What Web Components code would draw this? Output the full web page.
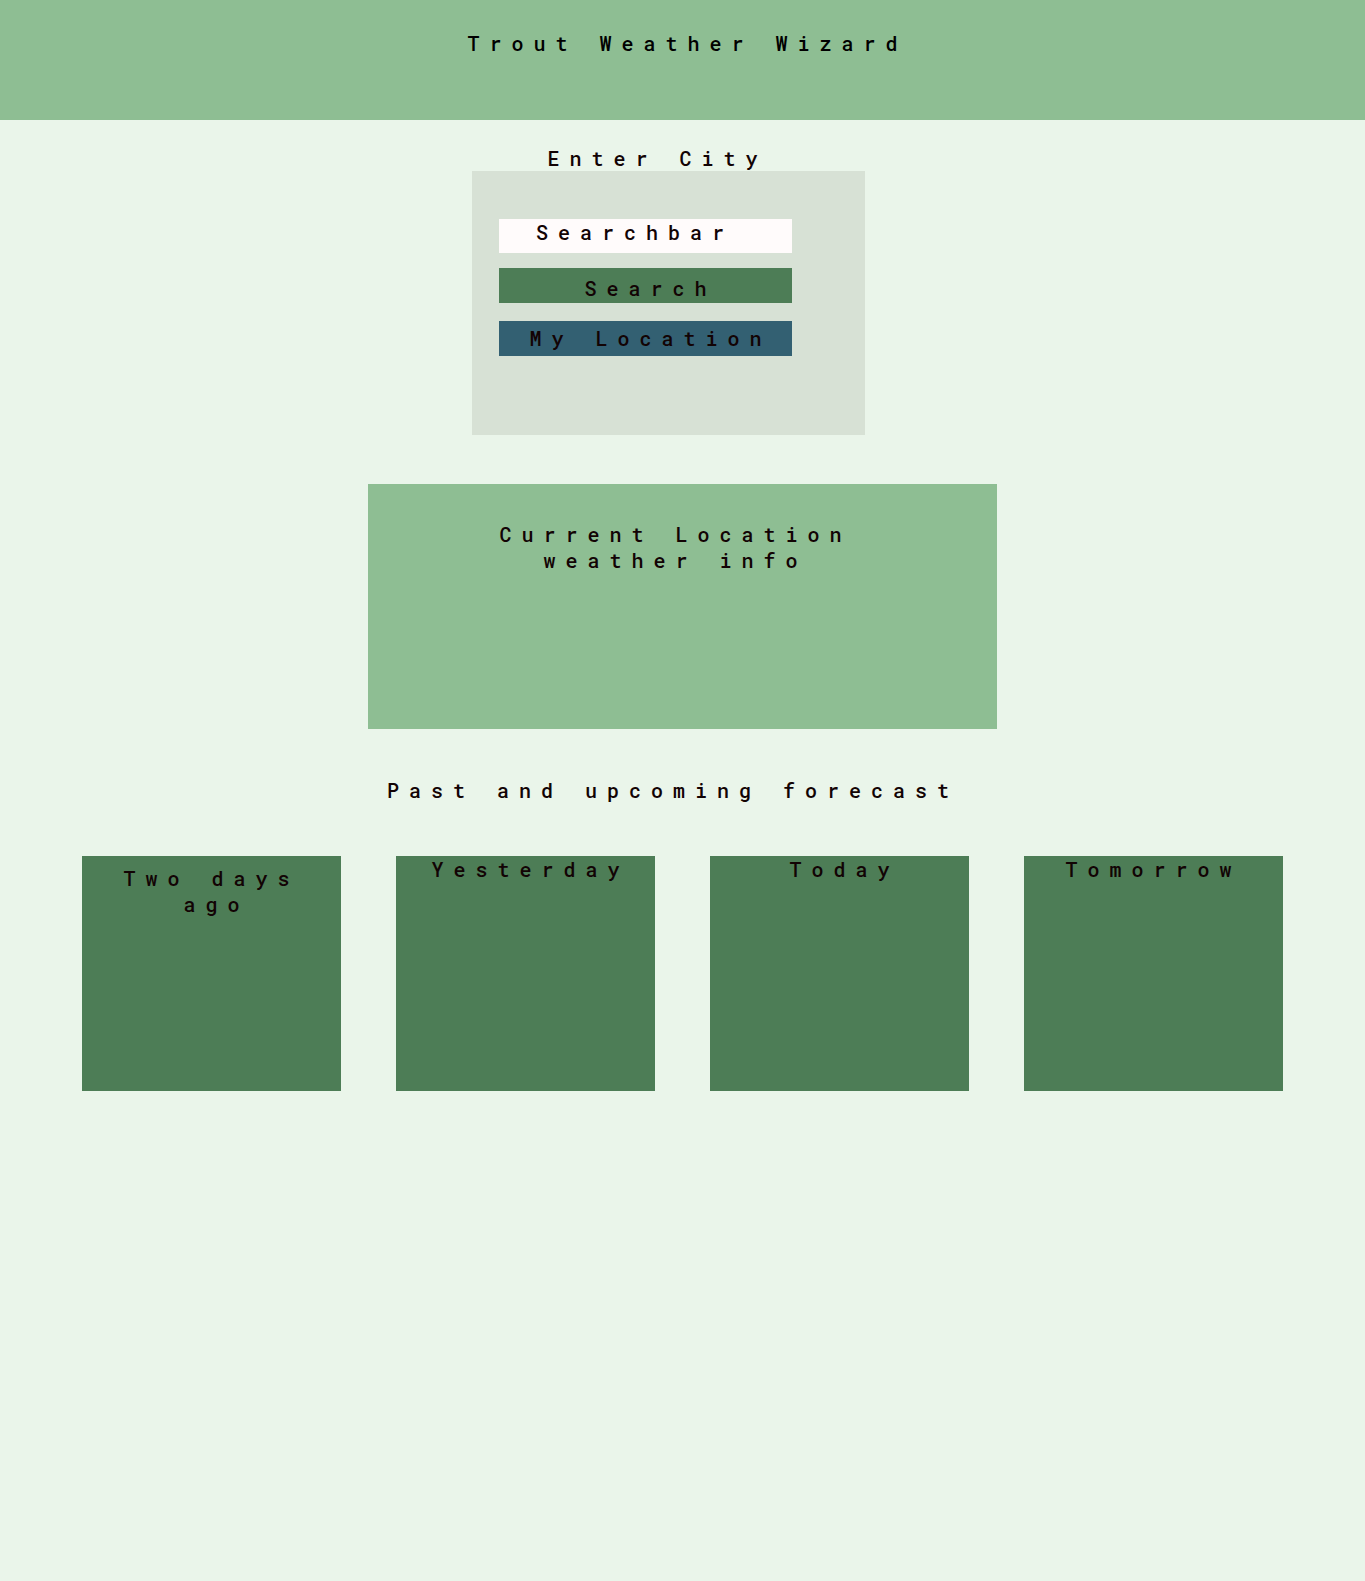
<!DOCTYPE html>
<html lang="en">
<head>
<meta charset="utf-8">
<meta name="viewport" content="width=device-width, initial-scale=1">
<title>Trout Weather Wizard</title>
<style>
  :root {
    --page: #eaf5ea;
    --sage: #8ebe93;
    --moss: #4d7d56;
    --lake: #336072;
    --mist: #d7e1d5;
    --paper: #fffbfb;
    --ink: #120304;
  }
  body {
    margin: 0;
    min-height: 100vh;
    background: var(--page);
    color: var(--ink);
    font: 500 20px/26px "Roboto Mono", "DejaVu Sans Mono", "Liberation Mono", monospace;
    letter-spacing: 10px;
  }
</style>
</head>
<body>
<weather-app></weather-app>
<script>
  class BaseElement extends HTMLElement {
    constructor() {
      super();
      this.attachShadow({ mode: "open" }).innerHTML =
        `<style>
          *, :host { box-sizing: border-box; }
          h1, h2, h3, p { margin: 0; font: inherit; text-align: center; }
          ${this.constructor.css}
        </style>${this.constructor.html}`;
    }
  }

  customElements.define("app-header", class extends BaseElement {
    static css = `
      :host { display: block; background: var(--sage); color: #000; padding: 30px 0 64px 10px; }`;
    static html = `<header><h1><slot></slot></h1></header>`;
  });

  customElements.define("city-search", class extends BaseElement {
    static css = `
      :host { display: block; width: 100%; max-width: 393px; }
      label { display: block; text-align: center; padding-right: 22px; }
      .panel { background: var(--mist); padding: 48px 73px 79px 27px; display: flex; flex-direction: column; }
      input, button {
        display: block; width: 100%; min-width: 0; margin: 0; border: 0; border-radius: 0;
        font: inherit; letter-spacing: inherit; color: inherit;
      }
      input { height: 34px; padding: 0 0 8px 37px; background: var(--paper); }
      input::placeholder { color: var(--ink); opacity: 1; }
      button { height: 35px; text-align: center; cursor: pointer; white-space: nowrap; }
      .search { margin-top: 15px; padding: 7px 0 2px 10px; background: var(--moss); }
      .locate { margin-top: 18px; padding: 4px 0 5px 10px; background: var(--lake); }`;
    static html = `
      <form onsubmit="return false">
        <label for="city">Enter City</label>
        <div class="panel">
          <input id="city" type="text" placeholder="Searchbar">
          <button class="search" type="submit">Search</button>
          <button class="locate" type="button">My Location</button>
        </div>
      </form>`;
  });

  customElements.define("current-weather", class extends BaseElement {
    static css = `
      :host { display: block; width: 100%; max-width: 629px; min-height: 245px; background: var(--sage); padding: 37px 134px 38px 120px; }`;
    static html = `<h2><slot></slot></h2>`;
  });

  customElements.define("day-card", class extends BaseElement {
    static css = `
      :host { display: block; min-height: 235px; background: var(--moss); padding: 0 0 0 10px; }
      :host([lead]) { padding: 9px 24px 0 34px; }
      :host([hang]) { text-indent: -10px; }`;
    static html = `<h3><slot></slot></h3>`;
  });

  customElements.define("forecast-section", class extends BaseElement {
    static css = `
      :host { display: block; width: 100%; }
      h2 { padding-right: 19px; margin-bottom: 53px; }
      .days { display: grid; grid-template-columns: repeat(4, minmax(0, 1fr)); gap: 55px; padding: 0 82px; }
      @media (max-width: 1200px) { .days { grid-template-columns: repeat(auto-fit, minmax(250px, 1fr)); } }`;
    static html = `
      <section>
        <h2><slot name="title"></slot></h2>
        <div class="days"><slot></slot></div>
      </section>`;
  });

  customElements.define("weather-app", class extends BaseElement {
    static css = `
      :host { display: block; }
      main { display: flex; flex-direction: column; align-items: center; padding: 25px 0 48px; }
      .finder { width: 100%; display: flex; justify-content: center; padding-right: 28px; }
      current-weather { margin: 49px 0 48px; }`;
    static html = `
      <app-header>Trout Weather Wizard</app-header>
      <main>
        <div class="finder"><city-search></city-search></div>
        <current-weather>Current Location weather info</current-weather>
        <forecast-section>
          <span slot="title">Past and upcoming forecast</span>
          <day-card lead hang>Two days ago</day-card>
          <day-card>Yesterday</day-card>
          <day-card>Today</day-card>
          <day-card hang>Tomorrow</day-card>
        </forecast-section>
      </main>`;
  });
</script>
</body>
</html>
